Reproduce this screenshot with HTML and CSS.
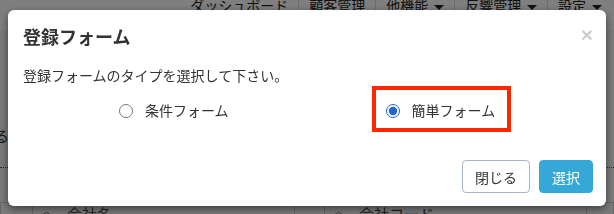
FILE: index.html
```html
<!DOCTYPE html>
<html lang="ja">
<head>
    <meta charset="UTF-8">
    <title>登録フォーム</title>
    <link rel="stylesheet" href="styles.css">
</head>
<body>
    <div class="page">
        <nav class="topnav">
            <a href="#">ダッシュボード</a>
            <a href="#">顧客管理</a>
            <a href="#">他機能 <span class="caret"></span></a>
            <a href="#">反響管理 <span class="caret"></span></a>
            <a href="#">設定 <span class="caret"></span></a>
        </nav>
        <main class="content">
            <p class="cut-text">る</p>
            <hr class="dots">
            <table class="list">
                <tr>
                    <td class="edge"></td>
                    <td class="cell"><span class="mark">○</span>会社名</td>
                    <td class="narrow"></td>
                    <td class="cell"><span class="mark">○</span>会社コード</td>
                    <td></td>
                </tr>
            </table>
        </main>
    </div>

    <div class="backdrop"></div>

    <div class="modal">
        <div class="modal-header">
            <h4 class="modal-title">登録フォーム</h4>
            <button class="close" type="button">&times;</button>
        </div>
        <div class="modal-body">
            <p>登録フォームのタイプを選択して下さい。</p>
            <div class="options">
                <label class="option">
                    <input type="radio" name="formtype" value="condition">
                    <span>条件フォーム</span>
                </label>
                <label class="option selected">
                    <input type="radio" name="formtype" value="simple" checked>
                    <span>簡単フォーム</span>
                </label>
            </div>
        </div>
        <div class="modal-footer">
            <button class="btn btn-default" type="button">閉じる</button>
            <button class="btn btn-primary" type="button">選択</button>
        </div>
    </div>
</body>
</html>
```

FILE: styles.css
```css
* {
    margin: 0;
    padding: 0;
    box-sizing: border-box;
}

body {
    font-family: 'Liberation Sans', 'Noto Sans CJK JP', sans-serif;
    font-size: 14px;
    color: #333;
    background: #f6f6f6;
    overflow: hidden;
}

/* Page underneath */
.page {
    height: 214px;
    overflow: hidden;
}

.topnav {
    display: flex;
    justify-content: flex-end;
    height: 30px;
    padding-right: 2px;
    background: #fff;
}

.topnav a {
    margin-top: -4px;
    padding: 0 10px;
    font-size: 14px;
    line-height: 20px;
    height: 20px;
    color: #222;
    text-decoration: none;
    border-left: 1px solid #ddd;
}

.topnav a:first-child {
    border-left: none;
}

.caret {
    display: inline-block;
    width: 0;
    height: 0;
    margin-left: 2px;
    vertical-align: middle;
    border-top: 5px solid #222;
    border-left: 5px solid transparent;
    border-right: 5px solid transparent;
}

.content {
    padding-top: 98px;
}

.cut-text {
    margin-left: -6px;
    font-size: 15px;
    line-height: 18px;
}

.dots {
    margin-top: 21px;
    border: none;
    border-top: 1px dotted #555;
}

.list {
    margin-top: 34px;
    width: 100%;
    table-layout: fixed;
    border-collapse: collapse;
}

.list td {
    height: 30px;
    border: 1px solid #ccc;
    color: #444;
    vertical-align: top;
    font-size: 15px;
}

.list .edge {
    width: 32px;
}

.list .cell {
    width: 262px;
    padding-left: 9px;
}

.list .narrow {
    width: 30px;
}

.mark {
    margin-right: 16px;
}

/* Modal */
.backdrop {
    position: fixed;
    top: 0;
    left: 0;
    right: 0;
    bottom: 0;
    background: rgba(0, 0, 0, 0.5);
}

.modal {
    position: fixed;
    top: 10px;
    left: 8px;
    width: 598px;
    background: #fff;
    border-radius: 6px;
    box-shadow: 0 3px 9px rgba(0, 0, 0, 0.5);
}

.modal-header {
    display: flex;
    justify-content: space-between;
    align-items: flex-start;
    padding: 16px 13px 0 15px;
}

.modal-title {
    font-size: 18px;
    font-weight: bold;
    line-height: 25px;
    color: #333;
}

.close {
    margin-top: -4px;
    font-family: 'Liberation Sans', sans-serif;
    font-size: 21px;
    font-weight: bold;
    line-height: 25px;
    color: #000;
    opacity: 0.2;
    background: none;
    border: none;
}

.modal-body {
    padding: 15px 15px 0;
}

.modal-body p {
    line-height: 20px;
}

.options {
    display: flex;
    gap: 127px;
    padding-left: 82px;
}

.option {
    display: flex;
    align-items: center;
    gap: 12px;
    padding: 13px 12px 9px 10px;
    border: 4px solid transparent;
    line-height: 16px;
    color: #333;
}

.option.selected {
    border-color: #ff2600;
}

.option input {
    width: 14px;
    height: 14px;
    margin: 0;
    accent-color: #1f66d1;
}

.modal-footer {
    display: flex;
    justify-content: flex-end;
    gap: 9px;
    padding: 28px 13px 13px;
}

.btn {
    height: 33px;
    padding: 0 12px;
    font-family: inherit;
    font-size: 14px;
    border-radius: 4px;
    border: 1px solid transparent;
}

.btn-default {
    color: #333;
    background: #fff;
    border-color: #a9b5c5;
}

.btn-primary {
    color: #fff;
    background: #35a8d8;
    border-color: #35a8d8;
}
```
